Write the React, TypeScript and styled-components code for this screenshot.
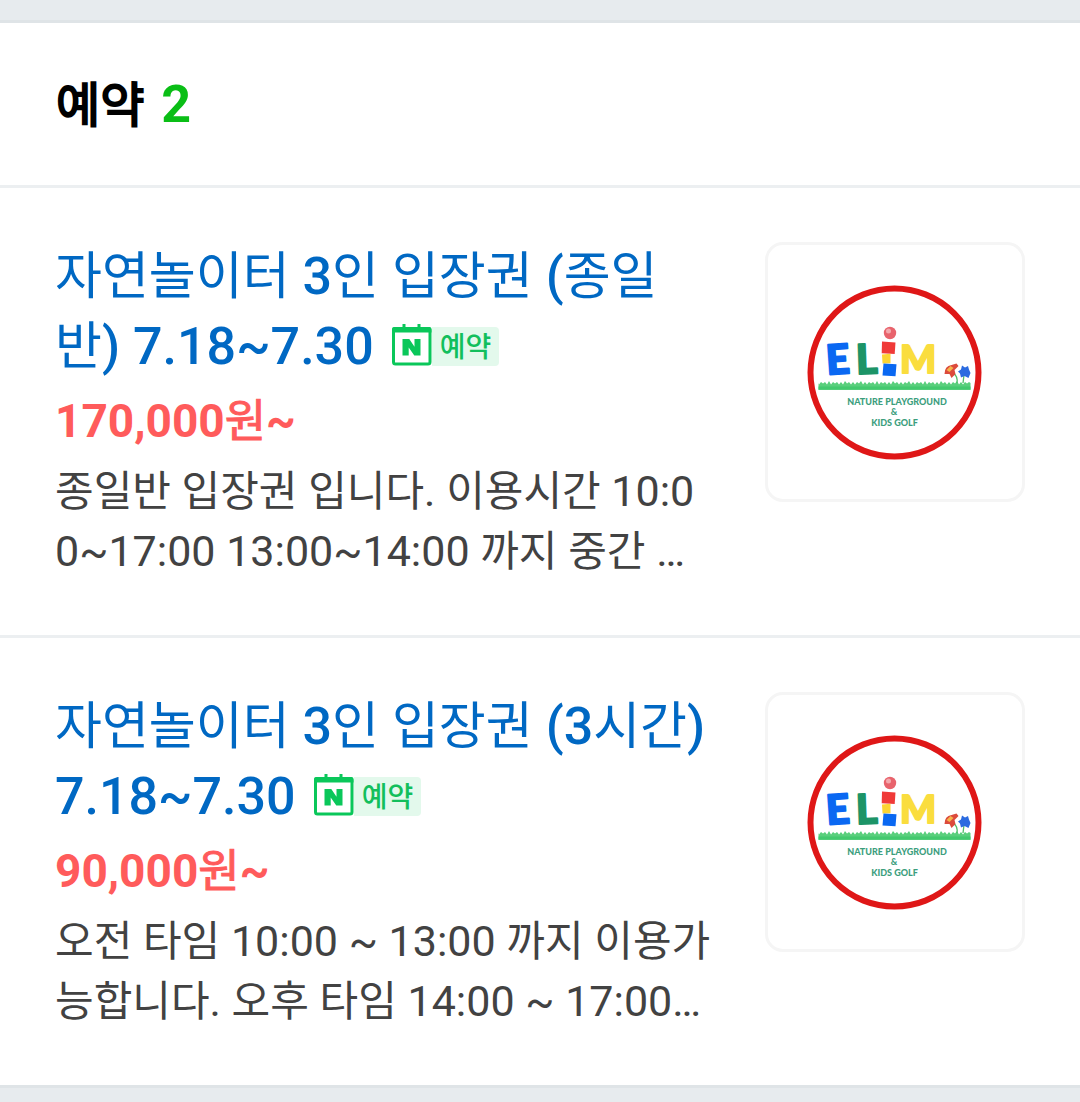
import React from "react";
import styled, { createGlobalStyle } from "styled-components";

const GlobalStyle = createGlobalStyle`
  * { box-sizing: border-box; }
  html { background: #e7ebee; }
  body {
    margin: 0;
    background: #e7ebee;
    font-family: Roboto, "Noto Sans CJK KR", sans-serif;
    color: #424242;
  }
`;

const Page = styled.main`
  padding: 20px 0;
`;

const Section = styled.section`
  background: #fff;
  border-top: 3px solid #dfe4e7;
  border-bottom: 3px solid #dfe4e7;
`;

const Heading = styled.h2`
  display: flex;
  align-items: baseline;
  gap: 17px;
  margin: 0;
  padding: 46px 56px 44px;
  font-size: 52px;
  line-height: 72px;
  font-weight: 700;
  color: #000;
`;

const Count = styled.span`
  color: #0abe16;
`;

const List = styled.ul`
  margin: 0;
  padding: 0;
  list-style: none;
`;

const Item = styled.li`
  display: flex;
  align-items: flex-start;
  gap: 50px;
  padding: 54px 55px;
  border-top: 3px solid #eceff1;
`;

const Info = styled.div`
  flex: 1;
  min-width: 0;
  word-break: break-all;
`;

const TitleLink = styled.a`
  display: block;
  font-size: 52px;
  line-height: 70px;
  font-weight: 500;
  color: #0068c3;
  text-decoration: none;
`;

const Price = styled.strong`
  display: block;
  margin-top: 6px;
  font-size: 46px;
  line-height: 66px;
  font-weight: 700;
  color: #ff5b5b;
`;

const Description = styled.p`
  margin: 7px 0 0;
  font-size: 43px;
  line-height: 60px;
`;

const HangulRun = styled.span<{ $size: number; $stroke: number }>`
  font-family: "Noto Sans CJK KR", sans-serif;
  font-size: ${(p) => p.$size}px;
  font-weight: 400;
  line-height: 1;
  -webkit-text-stroke: ${(p) => p.$stroke}px currentColor;
`;

const Badge = styled.span`
  display: inline-flex;
  align-items: flex-end;
  height: 43px;
  margin-left: 18px;
  vertical-align: -2px;
  white-space: nowrap;
`;

const BadgeLabel = styled.span`
  height: 39px;
  padding: 0 8px;
  border-radius: 0 4px 4px 0;
  background: #e3f9ec;
  font-family: "Noto Sans CJK KR", sans-serif;
  font-size: 28px;
  line-height: 37px;
  font-weight: 500;
  color: #12bf5c;
`;

const Thumb = styled.a`
  display: block;
  flex: none;
  width: 260px;
  height: 260px;
  border: 3px solid #f5f5f5;
  border-radius: 18px;
  overflow: hidden;
`;

const HANGUL = /([\uac00-\ud7a3]+)/;

/* Sets Hangul a step smaller than the Latin digits beside it. */
function Mixed({ text, size, stroke = 0 }: { text: string; size: number; stroke?: number }) {
  return (
    <>
      {text.split(HANGUL).map((part, i) =>
        HANGUL.test(part) ? (
          <HangulRun key={i} $size={size} $stroke={stroke}>
            {part}
          </HangulRun>
        ) : (
          part
        )
      )}
    </>
  );
}

function BookingIcon() {
  return (
    <svg width="40" height="43" viewBox="0 0 40 43" aria-hidden="true">
      <path d="M12 1v5M27 1v5" stroke="#0ac75a" strokeWidth="3" />
      <rect x="1.500" y="5.500" width="36.500" height="35.500" rx="2" fill="#fff" stroke="#0ac75a" strokeWidth="3" />
      <path d="M0 9.500V6a2 2 0 0 1 2-2h35.500a2 2 0 0 1 2 2v3.500z" fill="#0ac75a" />
      <path d="M10.500 16h6.800l5.200 7.800V16h6v16.500h-6.200l-5.600-8V32.500h-6.200z" fill="#0ac75a" />
    </svg>
  );
}

const grassBlades = Array.from({ length: 38 }, (_, i) => {
  const x = 60 + i * 4;
  return `L${x} ${i % 3 === 1 ? 147.5 : 148.5}L${x + 2} ${i % 4 === 2 ? 145 : 146}`;
}).join("");

function ElimLogo() {
  return (
    <svg width="254" height="254" viewBox="9 9 254 254" role="img" aria-label="ELIM">
      <circle cx="135.500" cy="136.500" r="84" fill="#fff" stroke="#df1717" strokeWidth="6" />
      <g fontFamily="Lato, sans-serif" fontWeight="900" strokeWidth="2" strokeLinejoin="round">
        <text x="67" y="138" fontSize="41" fill="#0a68f2" stroke="#0a68f2" transform="rotate(-4 79 123)">E</text>
        <text x="97" y="137.500" fontSize="41" fill="#1c9467" stroke="#1c9467" transform="rotate(-2 108 123)">L</text>
        <text x="141" y="137" fontSize="38" fill="#fadd3e" stroke="#fadd3e">M</text>
      </g>
      <circle cx="131" cy="97" r="6.200" fill="#e8636c" />
      <circle cx="129.500" cy="95" r="2.500" fill="#f3a9ad" />
      <path d="M123 105.500l13.500 1-.8 11.500-13-.8z" fill="#f03a38" />
      <path d="M123 118.500l8.500-.8v9.500l-8 .3z" fill="#fcd433" />
      <path d="M124.500 127.500l13 .8-1 12-13-.8z" fill="#0a68f2" />
      <path d={`M59.500 153.800V147${grassBlades}L211.500 147V153.800z`} fill="#59cf7c" />
      <path d="M59.500 150.500h152v3.300h-152z" fill="#43c96e" />
      <path d="M194 137q5 3 4 10M205 139l-1 8" fill="none" stroke="#50bd68" strokeWidth="1.300" />
      <path d="M185.500 138q0-8 7-9l5-1.500 2 2.500-4 4 1 4-4 4-2-4z" fill="#dc4b3c" />
      <path d="M187.500 134l4-4 3 2-4 4z" fill="#f5b54b" />
      <path d="M203 129.500l3 2 3-1.500 1 3.500 1.500 3.500-2 5-4-2-3.500 1.500-1-4-2-2 3-2z" fill="#2b6be0" />
      <g fill="#3c9e7d" fontFamily="Lato, sans-serif" fontWeight="900" fontSize="9" textAnchor="middle">
        <text x="138" y="169">NATURE PLAYGROUND</text>
        <text x="135" y="179">&amp;</text>
        <text x="135.500" y="189.500">KIDS GOLF</text>
      </g>
    </svg>
  );
}

const bookings = [
  {
    title: "자연놀이터 3인 입장권 (종일반) 7.18~7.30",
    price: "170,000원~",
    description: "종일반 입장권 입니다. 이용시간 10:00~17:00 13:00~14:00 까지 중간 …",
  },
  {
    title: "자연놀이터 3인 입장권 (3시간) 7.18~7.30",
    price: "90,000원~",
    description: "오전 타임 10:00 ~ 13:00 까지 이용가능합니다. 오후 타임 14:00 ~ 17:00…",
  },
];

export default function App() {
  return (
    <>
      <GlobalStyle />
      <Page>
        <Section>
          <Heading>
            <Mixed text="예약" size={48} stroke={2} />
            <Count>{bookings.length}</Count>
          </Heading>
          <List>
            {bookings.map((b) => (
              <Item key={b.title}>
                <Info>
                  <TitleLink href="#">
                    <Mixed text={b.title} size={51} />
                    <Badge>
                      <BookingIcon />
                      <BadgeLabel>예약</BadgeLabel>
                    </Badge>
                  </TitleLink>
                  <Price>
                    <Mixed text={b.price} size={45} stroke={1} />
                  </Price>
                  <Description>
                    <Mixed text={b.description} size={42} />
                  </Description>
                </Info>
                <Thumb href="#">
                  <ElimLogo />
                </Thumb>
              </Item>
            ))}
          </List>
        </Section>
      </Page>
    </>
  );
}
